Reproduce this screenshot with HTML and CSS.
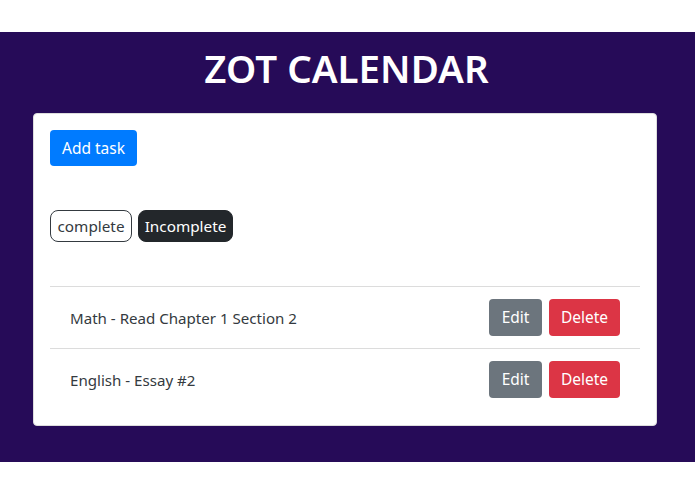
FILE: index.html
```html
<!DOCTYPE html>
<html>
<head>
<meta charset="utf-8">
<link rel="stylesheet" href="styles.css">
</head>
<body>
<div class="band">
  <h1 class="title">ZOT CALENDAR</h1>
  <div class="card">
    <button class="btn btn-primary">Add task</button>
    <div class="filters">
      <span class="pill pill-outline">complete</span>
      <span class="pill pill-dark">Incomplete</span>
    </div>
    <ul class="list">
      <li class="item">
        <span class="item-text">Math - Read Chapter 1 Section 2</span>
        <div class="actions">
          <button class="btn btn-secondary">Edit</button>
          <button class="btn btn-danger">Delete</button>
        </div>
      </li>
      <li class="item">
        <span class="item-text">English - Essay #2</span>
        <div class="actions">
          <button class="btn btn-secondary">Edit</button>
          <button class="btn btn-danger">Delete</button>
        </div>
      </li>
    </ul>
  </div>
</div>
</body>
</html>
```
FILE: styles.css
```css
* { box-sizing: border-box; }
html, body { margin: 0; padding: 0; background: #fff; }
body {
  font-family: "Noto Sans", "Open Sans", sans-serif;
  color: #212529;
  padding-top: 32px;
}
.band {
  background: #260b58;
  height: 430px;
  padding: 11px 38px 0 33px;
  display: flex;
  flex-direction: column;
}
.title {
  margin: 0 0 0 3px;
  height: 70px;
  text-align: center;
  color: #fff;
  font-size: 38.5px;
  font-weight: 600;
  line-height: 50px;
}
.card {
  background: #fff;
  border: 1px solid #ddd;
  border-radius: 4px;
  padding: 16px 16px 15px 16px;
  display: flex;
  flex-direction: column;
  align-items: flex-start;
}
.btn {
  font-family: inherit;
  font-size: 15.5px;
  border: none;
  border-radius: 4px;
  color: #fff;
  padding: 0;
  height: 36px;
  line-height: 37px;
  cursor: pointer;
}
.btn-primary { background: #007bff; width: 87px; }
.btn-secondary { background: #6c757d; width: 53px; height: 37px; }
.btn-danger { background: #dc3545; width: 71px; height: 37px; }
.filters {
  margin-top: 44px;
  display: flex;
  gap: 6px;
}
.pill {
  height: 32px;
  border-radius: 8px;
  font-size: 15.3px;
  line-height: 31px;
  padding: 0;
  text-align: center;
}
.pill-outline { border: 1px solid #343a40; color: #343a40; width: 82px; }
.pill-dark { background: #23272b; color: #fff; border: 1px solid #23272b; width: 95px; }
.list {
  list-style: none;
  margin: 44px 0 0 0;
  padding: 0;
  width: 100%;
}
.item {
  border-top: 1px solid #dcdcdc;
  height: 62px;
  display: flex;
  align-items: center;
  justify-content: space-between;
  padding: 0 20px;
}
.item-text { font-size: 15.1px; color: #343a40; }
.actions { display: flex; gap: 7px; }
```
